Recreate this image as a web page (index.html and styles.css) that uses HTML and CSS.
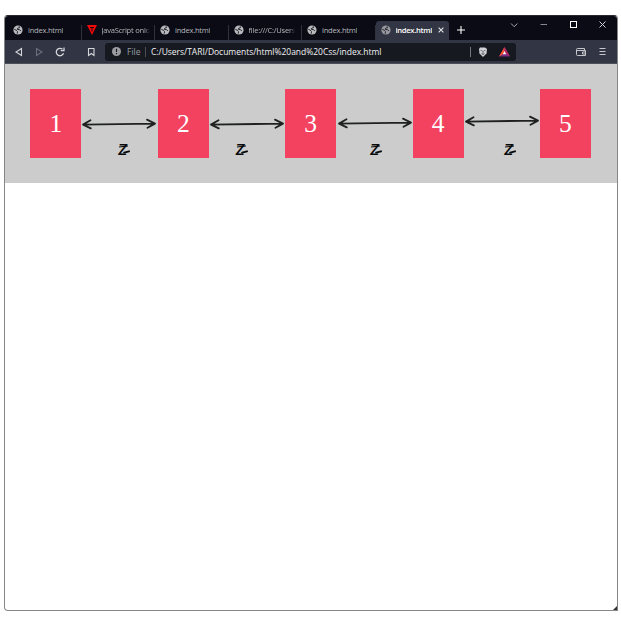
FILE: index.html
```html
<!DOCTYPE html>
<html lang="en">
<head>
<meta charset="utf-8">
<title>index.html</title>
<link rel="stylesheet" href="styles.css">
</head>
<body>
<svg class="defs" width="0" height="0" aria-hidden="true">
  <symbol id="globe" viewBox="0 0 10 10"><circle cx="5" cy="5" r="4.6" fill="#b9babd"/><path d="M1.300 4.300 3.200 5.200 4.500 6.500 4.200 8.600M6.200 1.300 6.500 2.600 4.600 3.300 4.200 4.300 6.600 4.700 7.800 6" fill="none" stroke="#22232c" stroke-width="1"/></symbol>
  <symbol id="arrow" viewBox="0 0 76 12"><path d="M2 6.6 74 5.6M9.5 2.2 2 6.6 9.8 10.4M66 1.6 74 5.6 66.5 9.8" fill="none" stroke="#1f2121" stroke-width="1.8" stroke-linecap="round" stroke-linejoin="round"/></symbol>
</svg>
<div class="window">
  <div class="titlebar">
    <div class="tabs">
      <div class="tab"><svg class="fav"><use href="#globe"/></svg><span>index.html</span></div>
      <div class="tab"><svg class="fav" viewBox="0 0 10 10"><path d="M0 0H10L5 10Z" fill="#f00a0a"/><path d="M3 2.500H7M5 2.500V6.500" stroke="#26070a" stroke-width="1"/></svg><span>JavaScript onlo</span></div>
      <div class="tab"><svg class="fav"><use href="#globe"/></svg><span>index.html</span></div>
      <div class="tab"><svg class="fav"><use href="#globe"/></svg><span>file:///C:/Users</span></div>
      <div class="tab"><svg class="fav"><use href="#globe"/></svg><span>index.html</span></div>
      <div class="tab active"><svg class="fav"><use href="#globe"/></svg><span>index.html</span><svg class="close" viewBox="0 0 6 6"><path d="M.6.6 5.4 5.4M5.4.6.6 5.4" stroke="#e4e5e8" stroke-width="1.1"/></svg></div>
    </div>
    <svg class="plus" viewBox="0 0 8 8"><path d="M4 0V8M0 4H8" stroke="#fff" stroke-width="1.1"/></svg>
    <svg class="controls" viewBox="0 0 96 10" fill="none" stroke="#a9aab0"><path d="M1 3.5 4.2 6.7 7.4 3.5"/><path d="M30.500 4.500H37" stroke="#888990"/><rect x="60.500" y="1.500" width="6" height="6" stroke="#fff"/><path d="M89.500 1.500 95.500 7.500M95.500 1.500 89.500 7.500" stroke="#d0d1d4"/></svg>
  </div>
  <div class="toolbar">
    <svg class="nav" viewBox="0 0 81 12" fill="none" stroke="#d5d7dd" stroke-width="1.1"><path d="M7.500 2.500V9.500L2 6Z"/><path d="M22.500 2.500V9.500L28 6Z" stroke="#6b6e7b"/><path d="M48.500 3.300A3.700 3.700 0 1 0 49.500 7.200M50 1.500V4.600H46.700" stroke-width="1.300"/><path d="M74.500 2.500H80V9.500L77.250 7.500 74.500 9.500Z"/></svg>
    <div class="address">
      <svg class="info" viewBox="0 0 9 9"><circle cx="4.500" cy="4.500" r="4.500" fill="#9b9da2"/><path d="M4.500 1.800V5.100M4.500 6V7.200" stroke="#171920" stroke-width="1.200"/></svg>
      <span class="scheme">File</span>
      <span class="url">C:/Users/TARI/Documents/html%20and%20Css/index.html</span>
      <svg class="shields" viewBox="0 0 42 12"><path d="M.5 1V11" stroke="#777982"/><path d="M10 1.500H15L17 3 16.500 7.500 13 11 9.500 7.500 9 3Z" fill="#d0d2d6"/><path d="M10.500 4.200 12.400 5M15.500 4.200 13.600 5M13 5V8.500M11.500 7.500 13 8.500 14.500 7.500" fill="none" stroke="#40424c" stroke-width=".7"/><path d="M34.500 1 40 10.500H29Z" fill="#772a86"/><path d="M34.500 1V5.500L32.500 8.500 29 10.500Z" fill="#ff5128"/><path d="M34.500 1 40 10.500 36.500 8.500 34.500 5.200Z" fill="#b8285f"/><path d="M34.500 5 36.200 8.300H32.800Z" fill="#fff"/></svg>
    </div>
    <svg class="menu" viewBox="0 0 32 10" fill="none" stroke="#c5c7cd" stroke-width="1"><path d="M9.500 3.500V1.500H2.500Q1.500 1.500 1.500 2.500V7.500Q1.500 8.500 2.500 8.500H10.500V3.500H2M10.500 5H7.500V7H10.500"/><path d="M24.500 1.500H30.500M24.500 4.500H30.500M24.500 7.500H30.500"/></svg>
  </div>
  <main class="page">
    <div class="row">
      <div class="box">1</div><div class="box">2</div><div class="box">3</div><div class="box">4</div><div class="box">5</div>
      <svg class="arrow a1"><use href="#arrow"/></svg><svg class="arrow a2"><use href="#arrow"/></svg><svg class="arrow a3"><use href="#arrow"/></svg><svg class="arrow a4"><use href="#arrow"/></svg>
      <span class="gap z1">z</span><span class="gap z2">z</span><span class="gap z3">z</span><span class="gap z4">z</span>
    </div>
  </main>
  <svg class="grip" viewBox="0 0 5 5"><path d="M5 0V5H0Z" fill="#333"/></svg>
</div>
</body>
</html>
```
FILE: styles.css
```css
* { box-sizing: border-box; }
body { margin: 0; height: 620px; overflow: hidden; padding: 15px 3px 9px 4px; background: #fff; font-family: "Open Sans", "Noto Sans", sans-serif; }
svg { display: block; flex: none; }
.defs { position: absolute; }
.window { position: relative; height: 596px; border: 1px solid #85868a; border-top-color: #292a30; border-radius: 4px 4px 0 4px; overflow: hidden; background: #fff; }
.titlebar { height: 24px; display: flex; align-items: flex-end; background: #0a0b14; }
.tabs { display: flex; padding-left: 3px; }
.tab { width: 73.5px; height: 19px; display: flex; align-items: center; padding: 0 1px 1px 5px; color: #b6b7bc; font-size: 7.6px; letter-spacing: -.25px; white-space: nowrap; position: relative; }
.tab:not(.active)::after { content: ""; position: absolute; right: 0; top: 4px; width: 1px; height: 15px; background: #303139; }
.tab span { overflow: hidden; margin-left: 5px; line-height: 12px; }
.tab:nth-child(2) span, .tab:nth-child(4) span { -webkit-mask-image: linear-gradient(90deg, #000 88%, transparent); mask-image: linear-gradient(90deg, #000 88%, transparent); }
.fav { width: 10px; height: 10px; }
.active { background: #323543; border-radius: 3px 3px 0 0; color: #fff; font-weight: 600; letter-spacing: -.3px; }
.active .fav { opacity: .75; }
.close { width: 6px; height: 6px; margin-left: auto; margin-right: 4px; }
.plus { width: 8px; height: 8px; margin: 0 0 6px 8px; }
.controls { width: 96px; height: 10px; margin: 0 11.5px 10px auto; }
.toolbar { height: 24px; display: flex; align-items: center; background: #323543; border-bottom: 1px solid #4c4e58; padding: 0 10px 0 9px; }
.nav { width: 81px; height: 12px; }
.address { width: 411px; height: 18px; margin-left: 10px; display: flex; align-items: center; background: #171920; border-radius: 3px; padding: 0 4px 0 7px; font-size: 8.5px; line-height: 14px; }
.info { width: 9px; height: 9px; }
.scheme { margin-left: 6px; width: 19px; color: #999ba1; border-right: 1px solid #4b4d54; line-height: 10px; }
.url { margin-left: 5px; color: #f1f1f3; white-space: nowrap; letter-spacing: -.02px; }
.shields { width: 42px; height: 12px; margin-left: auto; }
.menu { width: 32px; height: 10px; margin-left: auto; }
.page { background: #fff; }
.row { position: relative; display: flex; justify-content: space-between; height: 119px; padding: 25px 26px 0 25.4px; background: #ccc; }
.box { width: 51px; height: 68.5px; padding-top: 2px; display: grid; place-items: center; background: #f3425f; color: #fff; font: 25.5px "Liberation Serif", serif; }
.arrow { position: absolute; width: 76px; height: 12px; }
.a1 { left: 76.4px; top: 54px; }
.a2 { left: 203.6px; top: 54px; }
.a3 { left: 332.4px; top: 52.5px; }
.a4 { left: 459.4px; top: 50.5px; }
.gap { position: absolute; top: 71.5px; width: 12px; height: 22px; color: #080909; font: italic 400 22px/22px "Lato", sans-serif; text-align: center; }
.gap::before { content: ""; position: absolute; left: 6px; top: 15.5px; width: 7px; height: 1.5px; background: currentColor; border-radius: 1px; transform: rotate(-14deg); }
.gap::after { content: ""; position: absolute; left: 2px; top: 10.5px; width: 9px; height: 1.3px; background: currentColor; transform: rotate(-5deg); }
.z1 { left: 112px; }
.z2 { left: 229.5px; }
.z3 { left: 364px; }
.z4 { left: 498px; }
.grip { position: absolute; right: 0; bottom: 0; width: 4px; height: 4px; }
```
